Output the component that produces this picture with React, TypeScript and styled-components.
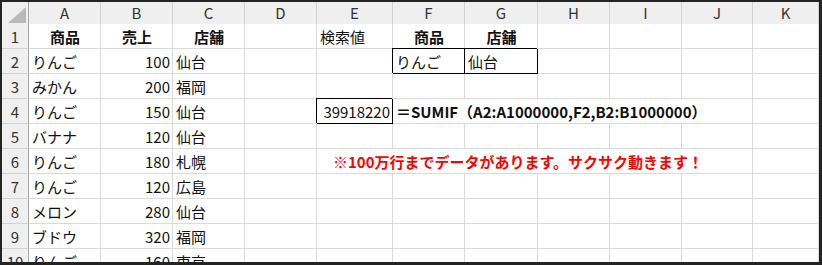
import styled, { createGlobalStyle } from "styled-components";

const GlobalStyle = createGlobalStyle`
  html, body {
    margin: 0;
    padding: 0;
    background: #ffffff;
  }
`;

const COLUMNS = ["A", "B", "C", "D", "E", "F", "G", "H", "I", "J", "K"];
const TEMPLATE = "27px 72px 72px 72px 72px 76px 72px 73px 72px 72px 71px 1fr";

type Align = "left" | "center" | "right";

type CellData = {
  text?: string;
  align?: Align;
  bold?: boolean;
  boxed?: boolean;
  span?: number;
  color?: string;
  indent?: number;
};

const Frame = styled.div`
  width: 822px;
  height: 265px;
  box-sizing: border-box;
  background: #232323;
  padding: 2px 3px 3px 2px;
`;

const Sheet = styled.div`
  width: 100%;
  height: 100%;
  background: #ffffff;
  overflow: hidden;
  font-family: "Noto Sans CJK JP", "Noto Sans", sans-serif;
`;

const Row = styled.div<{ $height: number }>`
  display: grid;
  grid-template-columns: ${TEMPLATE};
  height: ${(p) => p.$height}px;
`;

const Corner = styled.div`
  box-sizing: border-box;
  background: #efefef;
  border-right: 1px solid #a8a8a8;
  border-bottom: 1px solid #a8a8a8;
  display: flex;
  align-items: flex-end;
  justify-content: flex-end;
  padding: 0 2px 2px 0;
`;

const CornerMark = styled.span`
  width: 18px;
  height: 16px;
  background: #b9b9b9;
  clip-path: polygon(100% 0, 100% 100%, 0 100%);
`;

const ColHeader = styled.div`
  box-sizing: border-box;
  background: #efefef;
  border-right: 1px solid #d2d2d2;
  border-bottom: 1px solid #a8a8a8;
  display: flex;
  align-items: center;
  justify-content: center;
  padding-bottom: 2px;
  font-size: 15px;
  color: #333333;
`;

const RowHeader = styled.div`
  box-sizing: border-box;
  background: #efefef;
  border-right: 1px solid #a8a8a8;
  border-bottom: 1px solid #d2d2d2;
  display: flex;
  align-items: center;
  justify-content: center;
  font-size: 15px;
  color: #333333;
`;

const Cell = styled.div<{
  $align: Align;
  $bold: boolean;
  $boxed: boolean;
  $span: number;
  $color: string;
  $indent: number;
}>`
  box-sizing: border-box;
  grid-column: span ${(p) => p.$span};
  display: flex;
  align-items: center;
  justify-content: ${(p) =>
    p.$align === "right" ? "flex-end" : p.$align === "center" ? "center" : "flex-start"};
  padding: 0 2px 0 ${(p) => 3 + p.$indent}px;
  border-right: 1px solid ${(p) => (p.$boxed ? "#000000" : "#dadada")};
  border-bottom: 1px solid ${(p) => (p.$boxed ? "#000000" : "#dadada")};
  box-shadow: ${(p) => (p.$boxed ? "-1px -1px 0 0 #000000" : "none")};
  background: #ffffff;
  font-size: 15px;
  font-weight: ${(p) => (p.$bold ? 700 : 400)};
  color: ${(p) => p.$color};
  white-space: nowrap;
  overflow: visible;
`;

const head = (text: string): CellData => ({ text, align: "center", bold: true });
const num = (text: string): CellData => ({ text, align: "right" });

const rows: CellData[][] = [
  [head("商品"), head("売上"), head("店舗"), {}, { text: "検索値" }, head("商品"), head("店舗"), {}, {}, {}, {}],
  [{ text: "りんご" }, num("100"), { text: "仙台" }, {}, {}, { text: "りんご", boxed: true }, { text: "仙台", boxed: true }, {}, {}, {}, {}],
  [{ text: "みかん" }, num("200"), { text: "福岡" }, {}, {}, {}, {}, {}, {}, {}, {}],
  [
    { text: "りんご" },
    num("150"),
    { text: "仙台" },
    {},
    { text: "39918220", align: "right", boxed: true },
    { text: "＝SUMIF（A2:A1000000,F2,B2:B1000000）", bold: true, span: 5 },
    {},
  ],
  [{ text: "バナナ" }, num("120"), { text: "仙台" }, {}, {}, {}, {}, {}, {}, {}, {}],
  [
    { text: "りんご" },
    num("180"),
    { text: "札幌" },
    {},
    { text: "※100万行までデータがあります。サクサク動きます！", bold: true, span: 6, color: "#ff0000", indent: 13 },
    {},
  ],
  [{ text: "りんご" }, num("120"), { text: "広島" }, {}, {}, {}, {}, {}, {}, {}, {}],
  [{ text: "メロン" }, num("280"), { text: "仙台" }, {}, {}, {}, {}, {}, {}, {}, {}],
  [{ text: "ブドウ" }, num("320"), { text: "福岡" }, {}, {}, {}, {}, {}, {}, {}, {}],
  [{ text: "りんご" }, num("160"), { text: "東京" }, {}, {}, {}, {}, {}, {}, {}, {}],
];

export default function App() {
  return (
    <>
      <GlobalStyle />
      <Frame>
        <Sheet>
          <Row $height={22}>
            <Corner>
              <CornerMark />
            </Corner>
            {COLUMNS.map((c) => (
              <ColHeader key={c}>{c}</ColHeader>
            ))}
          </Row>
          {rows.map((cells, r) => (
            <Row key={r} $height={25}>
              <RowHeader>{r + 1}</RowHeader>
              {cells.map((cell, i) => (
                <Cell
                  key={i}
                  $align={cell.align ?? "left"}
                  $bold={!!cell.bold}
                  $boxed={!!cell.boxed}
                  $span={cell.span ?? 1}
                  $color={cell.color ?? "#111111"}
                  $indent={cell.indent ?? 0}
                >
                  {cell.text}
                </Cell>
              ))}
            </Row>
          ))}
        </Sheet>
      </Frame>
    </>
  );
}
